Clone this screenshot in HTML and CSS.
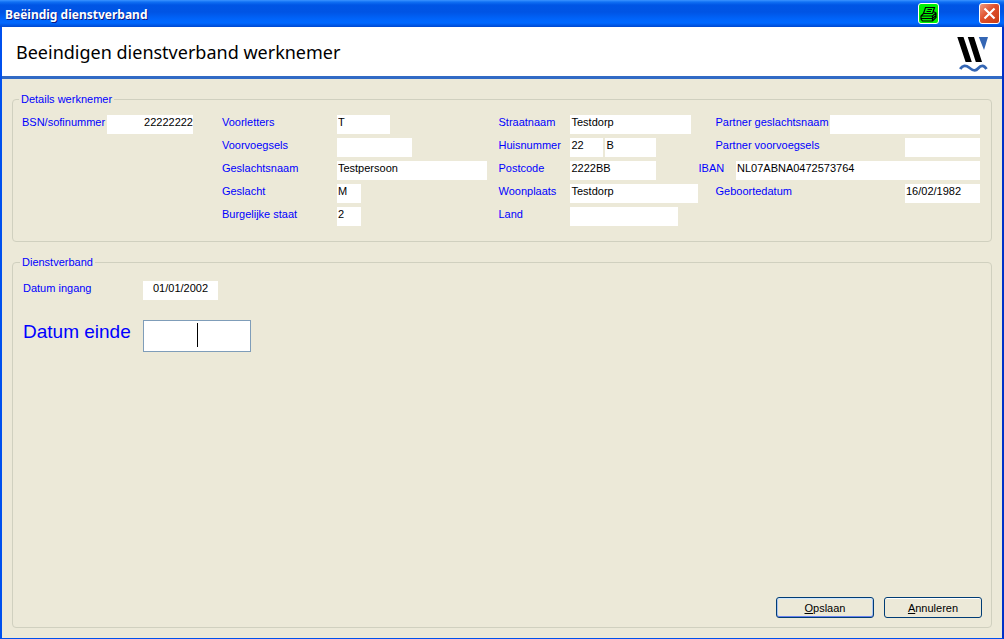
FILE: index.html
```html
<!DOCTYPE html>
<html lang="nl">
<head>
<meta charset="utf-8">
<title>Beëindig dienstverband</title>
<link rel="stylesheet" href="styles.css">
</head>
<body>
<div class="window">
  <header class="titlebar">
    <span class="titlebar-text">Beëindig dienstverband</span>
    <button class="tool-button print" type="button" aria-label="Afdrukken">
      <svg width="19" height="19" viewBox="0 0 19 19" fill="none" stroke="#000" stroke-width="1.200">
        <path d="M4.500 9.500L6.500 3.500H15.500L13.500 9.500M8.500 5.500H13M7.500 7.500H12M4.500 9.500L2 12V15L3.500 17H13.500L17 13.500V9L15.500 8H14.500M4.500 9.500H13.500M2 12H13.500L17 9M13.500 12V17M2 14.500H13.500L17 11.500"/>
      </svg>
    </button>
    <button class="tool-button close" type="button" aria-label="Sluiten">
      <svg width="19" height="19" viewBox="0 0 19 19" fill="none" stroke="#fff" stroke-width="2.200">
        <path d="M4.500 4.500L14.500 14.500M14.500 4.500L4.500 14.500"/>
      </svg>
    </button>
  </header>

  <div class="banner">
    <h1 class="banner-title">Beeindigen dienstverband werknemer</h1>
    <svg class="logo" width="32" height="38" viewBox="0 0 32 38" aria-hidden="true">
      <path d="M0.300 3H6.500L14.800 28H8.600ZM10.800 3H17L25 28H18.800Z" fill="#000"/>
      <path d="M21.800 3H31L27 16Z" fill="#3466b4"/>
      <path d="M3.200 35C5.500 31 9 31 12 33.500S18 38 21 34.500S27 31 29.500 35" fill="none" stroke="#3466b4" stroke-width="2.800"/>
    </svg>
  </div>

  <form class="content">
    <fieldset class="group">
      <legend>Details werknemer</legend>
      <div class="columns">
        <div class="column person-id">
          <div class="row"><label for="bsn">BSN/sofinummer</label><input class="field w86 right" id="bsn" value="22222222" readonly></div>
        </div>
        <div class="column names">
          <div class="row"><label for="voorletters">Voorletters</label><input class="field w53" id="voorletters" value="T" readonly></div>
          <div class="row"><label for="voorvoegsels">Voorvoegsels</label><input class="field w75" id="voorvoegsels" readonly></div>
          <div class="row"><label for="naam">Geslachtsnaam</label><input class="field w150" id="naam" value="Testpersoon" readonly></div>
          <div class="row"><label for="geslacht">Geslacht</label><input class="field w24" id="geslacht" value="M" readonly></div>
          <div class="row"><label for="staat">Burgelijke staat</label><input class="field w24" id="staat" value="2" readonly></div>
        </div>
        <div class="column address">
          <div class="row"><label for="straat">Straatnaam</label><input class="field w121" id="straat" value="Testdorp" readonly></div>
          <div class="row"><label for="huisnr">Huisnummer</label><input class="field w33" id="huisnr" value="22" readonly><input class="field w51" aria-label="Toevoeging" value="B" readonly></div>
          <div class="row"><label for="postcode">Postcode</label><input class="field w86" id="postcode" value="2222BB" readonly></div>
          <div class="row"><label for="woonplaats">Woonplaats</label><input class="field w128" id="woonplaats" value="Testdorp" readonly></div>
          <div class="row"><label for="land">Land</label><input class="field w108" id="land" readonly></div>
        </div>
        <div class="column partner">
          <div class="row inset"><label for="partner-naam">Partner geslachtsnaam</label><input class="field w150" id="partner-naam" readonly></div>
          <div class="row inset"><label for="partner-voor">Partner voorvoegsels</label><input class="field w75" id="partner-voor" readonly></div>
          <div class="row"><label for="iban">IBAN</label><input class="field w244" id="iban" value="NL07ABNA0472573764" readonly></div>
          <div class="row inset"><label for="geboren">Geboortedatum</label><input class="field w75" id="geboren" value="16/02/1982" readonly></div>
        </div>
      </div>
    </fieldset>

    <fieldset class="group contract">
      <legend>Dienstverband</legend>
      <div class="contract-body">
        <div class="row"><label for="ingang">Datum ingang</label><input class="field w75 center" id="ingang" value="01/01/2002" readonly></div>
        <div class="row end-row"><label for="einde">Datum einde</label><span class="entry"><input class="end-date" id="einde"><span class="caret"></span></span></div>
        <div class="actions">
          <button class="button default" type="button"><u>O</u>pslaan</button>
          <button class="button" type="button"><u>A</u>nnuleren</button>
        </div>
      </div>
    </fieldset>
  </form>
</div>
</body>
</html>
```
FILE: styles.css
```css
* { box-sizing: border-box; }

body {
  margin: 0;
  font: 11px/14px "Liberation Sans", Arial, sans-serif;
  color: #000;
}

.window {
  display: flex;
  flex-direction: column;
  min-height: 100vh;
  background: #ece9d8;
  border: solid #0050ee;
  border-width: 0 2px 1px;
  border-right-color: #0030c8;
}

.titlebar {
  display: flex;
  align-items: center;
  height: 27px;
  margin: 0 -2px;
  padding: 0 4px 0 5px;
  background: linear-gradient(#3c94ff 0, #1070f4 2px, #0055e5 5px, #0054e4 12px, #0064fa 19px, #0068ff 23px, #0048d0 27px);
}

.titlebar-text {
  flex: 1;
  padding-top: 2px;
  font: bold 12px/16px "Noto Sans", sans-serif;
  color: #fff;
  text-shadow: 1px 1px #0a1883;
}

.tool-button {
  display: flex;
  align-items: center;
  justify-content: center;
  width: 21px;
  height: 21px;
  padding: 0;
  border: 1px solid #fff;
  border-radius: 3px;
}

.print {
  margin-right: 40px;
  background: #00f000;
}

.close { background: linear-gradient(135deg, #f09a80, #e0502c 45%, #c83c14); }

.banner {
  display: flex;
  align-items: center;
  justify-content: space-between;
  height: 52px;
  padding: 0 13px 0 14px;
  background: #fff;
  border-bottom: 3px solid #316ac5;
}

.banner-title {
  margin: 0;
  font: 18px/24px "Noto Sans", sans-serif;
}

.logo { margin-top: 2px; }

.content {
  display: flex;
  flex: 1;
  flex-direction: column;
  gap: 13px;
  padding: 13px 10px 10px;
}

.group {
  min-width: 0;
  margin: 0;
  padding: 9px 11px 15px 9px;
  border: 1px solid #d0d0bf;
  border-radius: 4px;
}

.group legend {
  margin-left: -3px;
  padding: 0 2px;
  color: #0000ff;
}

.columns {
  display: grid;
  grid-template-columns: 201fr 278fr 197fr 283fr;
}

.column {
  display: flex;
  flex-direction: column;
  gap: 4px;
}

.row {
  display: flex;
  align-items: flex-start;
}

.row label {
  flex: none;
  color: #0000ff;
  white-space: nowrap;
}

.person-id label { width: 85px; }
.names label { width: 115px; }
.address label { width: 72px; }
.address .row { gap: 0 2px; }
.address label { margin-right: -2px; }
.partner .row { justify-content: space-between; }
.partner .inset { padding-left: 17px; }

.field {
  height: 19px;
  padding: 0 1px 5px;
  border: 0;
  background: #fff;
  font: inherit;
  color: #000;
}

.right { text-align: right; padding-right: 0; }
.center { text-align: center; }
.w24 { width: 24px; }
.w33 { width: 33px; }
.w51 { width: 51px; }
.w53 { width: 53px; }
.w75 { width: 75px; }
.w86 { width: 86px; }
.w108 { width: 108px; }
.w121 { width: 121px; }
.w128 { width: 128px; }
.w150 { width: 150px; }
.w244 { width: 244px; }

.contract {
  flex: 1;
  padding: 12px 9px 9px 10px;
}

.contract legend { margin-left: -3px; }

/* Fills the window below the first group so the buttons sit at the bottom. */
.contract-body {
  display: flex;
  flex-direction: column;
  min-height: calc(100vh - 302px);
}

.contract label { width: 120px; }

.end-row { margin-top: 20px; }

.end-row label { font-size: 19px; line-height: 24px; }

.entry {
  position: relative;
  display: flex;
}

.end-date {
  width: 108px;
  height: 32px;
  border: 1px solid #7f9db9;
  background: #fff;
  font: 19px/24px "Liberation Sans", Arial, sans-serif;
  text-align: center;
}

.caret {
  position: absolute;
  top: 3px;
  left: 50%;
  width: 1px;
  height: 24px;
  background: #000;
}

.actions {
  display: flex;
  justify-content: flex-end;
  gap: 10px;
  margin-top: auto;
}

.button {
  width: 98px;
  height: 21px;
  padding: 0;
  border: 1px solid #003c74;
  border-radius: 3px;
  background: #ece9d8;
  box-shadow: inset 0 1px #fff;
  font: inherit;
  color: #000;
}

.default { box-shadow: inset 0 1px #cee7ff, inset 0 -1px #6982ee, inset 1px 0 #a9c2f0, inset -1px 0 #a9c2f0; }
```
